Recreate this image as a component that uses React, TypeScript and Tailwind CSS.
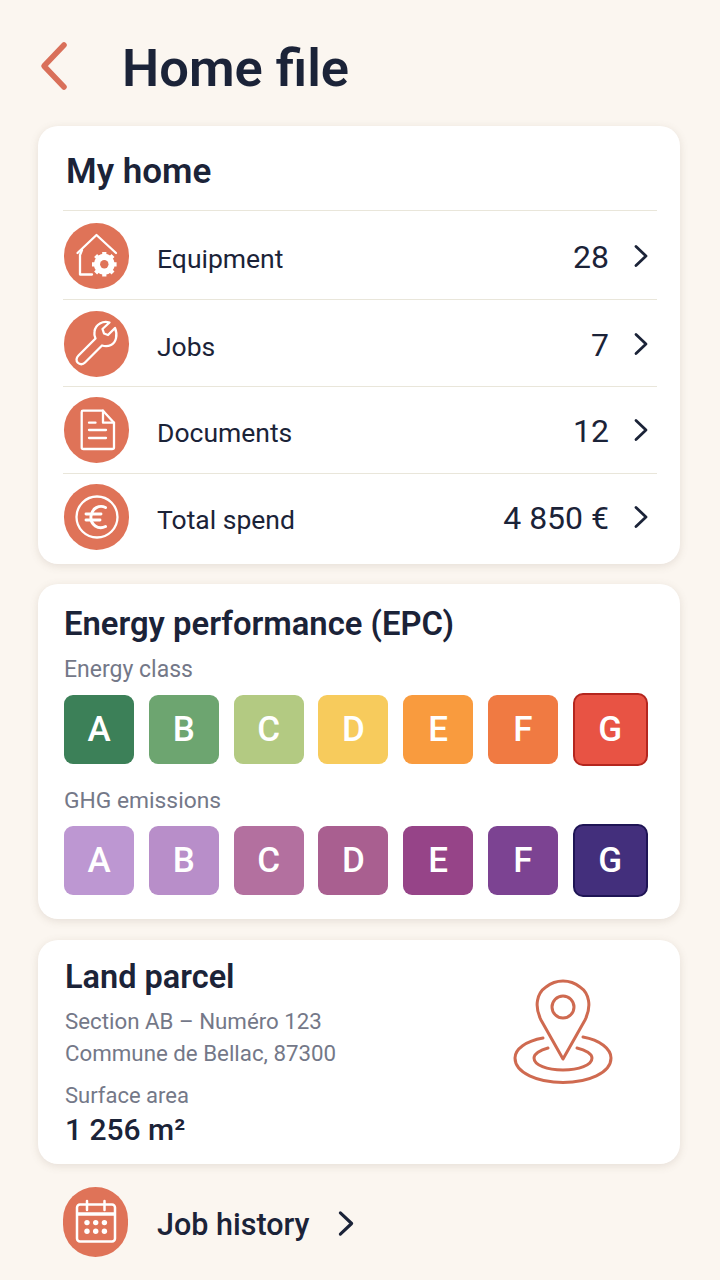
import React from "react";

const stroke = { fill: "none", stroke: "#fff", strokeWidth: 2.3, strokeLinecap: "round", strokeLinejoin: "round" } as const;

const Chevron = ({ className }: { className: string }) => (
  <svg viewBox="0 0 16 24" className={className} fill="none" stroke="#1b2338" strokeWidth="2.800" strokeLinecap="round" strokeLinejoin="round">
    <path d="M3 2.500 L13 12 L3 21.500" />
  </svg>
);

const HomeGear = () => (
  <svg viewBox="0 0 66 66" className="w-[66px] h-[66px]">
    <g {...stroke}>
      <path d="M13.500 30 L32.500 12 L52 30" />
      <path d="M18 27 L16 32 V51.500 H28" />
    </g>
    <circle cx="40.300" cy="41.300" r="7.500" fill="none" stroke="#fff" strokeWidth="6" />
    <g stroke="#fff" strokeWidth="4.200" strokeLinecap="butt">
      <path d="M40.300 29 V53.600 M28 41.300 H52.600 M31.600 32.600 L49 50 M49 32.600 L31.600 50" />
    </g>
    <circle cx="40.300" cy="41.300" r="4.200" fill="#df7358" />
  </svg>
);
const Wrench = () => (
  <svg viewBox="0 0 66 66" className="w-[66px] h-[66px]">
    <path {...stroke} d="M51 17 L44 24 L40 22.500 L38.500 18 L45.500 11.500 C39 9.500 31.500 13 30.500 20.500 C30 23.500 30.500 25.500 31.500 27.500 L14.500 44.500 C12 47 12 50 13.800 51.800 C15.800 53.800 18.800 53.800 21 51.500 L38 34.500 C41 35.500 44 35.500 47 34 C52 31.500 54 24 51 17 Z" />
  </svg>
);
const Doc = () => (
  <svg viewBox="0 0 66 66" className="w-[66px] h-[66px]">
    <g {...stroke}>
      <path d="M19 13.700 H39 L50 25.700 V50.500 C50 51.500 49 52 48 52 H19.500 C18.500 52 17.700 51.500 17.700 50.500 V15 C17.700 14.200 18.200 13.700 19 13.700 Z" />
      <path d="M39 13.700 V25.700 H50" />
      <path d="M25 25.700 H31.500 M25 33 H42 M25 41 H42" />
    </g>
  </svg>
);
const Euro = () => (
  <svg viewBox="0 0 66 66" className="w-[66px] h-[66px]">
    <g {...stroke}>
      <circle cx="33" cy="33" r="20.500" />
      <path d="M41.500 23.500 C35.500 20.500 28 24 27 32 C26 41 34.500 46 41.500 42.500" strokeWidth="2.900" />
      <path d="M22 30 H37 M22 36 H36" strokeWidth="2.900" />
    </g>
  </svg>
);
const Calendar = () => (
  <svg viewBox="0 0 66 66" className="w-[66px] h-[66px] shrink-0">
    <g {...stroke} strokeWidth="2.500">
      <rect x="14" y="15.500" width="38" height="37" rx="3" />
      <path d="M24 12 V21 M41.500 12 V21" />
    </g>
    <path d="M14 25 H52" stroke="#fff" strokeWidth="3.500" />
    <g fill="#fff">
      <circle cx="24" cy="33.600" r="2.700" /><circle cx="32.700" cy="33.600" r="2.700" /><circle cx="41.400" cy="33.600" r="2.700" />
      <circle cx="24" cy="42.300" r="2.700" /><circle cx="32.700" cy="42.300" r="2.700" /><circle cx="41.400" cy="42.300" r="2.700" />
    </g>
  </svg>
);
const Pin = () => (
  <svg viewBox="0 0 100 106" className="w-[100px] h-[106px]" fill="none" stroke="#cf6a50" strokeWidth="3" strokeLinecap="round" strokeLinejoin="round">
    <path d="M50 81 L28 42 C21 28 24 15 33 9 C43 1 57 1 67 9 C76 15 79 28 72 42 Z" />
    <circle cx="50" cy="29" r="11" />
    <path d="M30 60 C13 63 2 71 2 80 C2 95 25 104.500 50 104.500 C75 104.500 98 95 98 80 C98 71 87 62 70 59" />
    <path d="M35 70 C27 72 21 76 21 80 C21 87 34 92 50 92 C66 92 79 87 79 80 C79 76 73 72 64 70" />
  </svg>
);

const rows = [
  { icon: <HomeGear />, label: "Equipment", value: "28", h: "h-[89px] pt-[2px]" },
  { icon: <Wrench />, label: "Jobs", value: "7", h: "h-[87px] pt-[2px]" },
  { icon: <Doc />, label: "Documents", value: "12", h: "h-[87px]" },
  { icon: <Euro />, label: "Total spend", value: "4 850 €", h: "h-[90px] pb-[4px]" },
];

const energy = [
  ["A", "bg-[#3c8058]"], ["B", "bg-[#6da570]"], ["C", "bg-[#b3ca82]"], ["D", "bg-[#f7cb5c]"],
  ["E", "bg-[#f99b3e]"], ["F", "bg-[#f07a42]"],
];
const ghg = [
  ["A", "bg-[#bd97d2]"], ["B", "bg-[#b88ec9]"], ["C", "bg-[#b3709f]"], ["D", "bg-[#a95f90]"],
  ["E", "bg-[#964488]"], ["F", "bg-[#7c4392]"],
];

function Scale({ items, last }: { items: string[][]; last: string }) {
  return (
    <div className="flex items-center gap-[14.800px]">
      {items.map(([l, c]) => (
        <div key={l} className={`w-[70px] h-[69px] rounded-[9px] flex items-center justify-center pt-px text-white text-[35px] font-medium ${c}`}>{l}</div>
      ))}
      <div className={`w-[75px] h-[73px] rounded-[10px] border-2 flex items-center justify-center pt-px text-white text-[35px] font-medium ${last}`}>G</div>
    </div>
  );
}

export default function App() {
  return (
    <div className="w-[720px] h-[1280px] overflow-hidden bg-[#fbf6f0] pl-[38px] pr-[40px] text-[#1b2338] font-['Roboto',sans-serif]">
      <header className="h-[126px] flex items-center">
        <svg viewBox="0 0 30 50" className="w-[30px] h-[50px] ml-[2px] mt-[5px]" fill="none" stroke="#d9705a" strokeWidth="5.500" strokeLinecap="round" strokeLinejoin="round">
          <path d="M24 4 L4 25 L24 46" />
        </svg>
        <h1 className="ml-[52px] mt-[10px] text-[52.500px] font-semibold leading-none">Home file</h1>
      </header>

      <section className="h-[438px] bg-white rounded-[20px] shadow-[0_2px_8px_rgba(120,100,80,0.16)] pl-[25px] pr-[23px]">
        <h2 className="h-[85px] flex items-center text-[35px] font-semibold pt-[8px] pl-[3px] border-b border-[#e9e6da]">My home</h2>
        {rows.map((r, i) => (
          <div key={r.label} className={`flex items-center ${r.h} ${i < 3 ? "border-b border-[#e9e6da]" : ""}`}>
            <div className="w-[65px] h-[66px] ml-px rounded-full bg-[#df7358] shrink-0">{r.icon}</div>
            <span className="ml-[28px] mt-[6px] text-[26.500px] leading-none">{r.label}</span>
            <span className="ml-auto mt-px text-[32px] leading-none">{r.value}</span>
            <Chevron className="ml-[24px] mr-[8px] w-[16px] h-[24px]" />
          </div>
        ))}
      </section>

      <section className="h-[335px] mt-[20px] bg-white rounded-[20px] shadow-[0_2px_8px_rgba(120,100,80,0.16)] pl-[26px] pr-[32px] pt-[18px]">
        <h2 className="text-[32.800px] leading-[44px] font-semibold whitespace-nowrap">Energy performance (EPC)</h2>
        <p className="text-[23px] leading-[32px] text-[#747888] mt-[8px] mb-[7px]">Energy class</p>
        <Scale items={energy} last="bg-[#e85344] border-[#b4261e]" />
        <p className="text-[22.800px] leading-[32px] text-[#747888] mt-[19px] mb-[7px]">GHG emissions</p>
        <Scale items={ghg} last="bg-[#432f7c] border-[#1f1555]" />
      </section>

      <section className="h-[224px] mt-[21px] bg-white rounded-[20px] shadow-[0_2px_8px_rgba(120,100,80,0.16)] pl-[27px] pr-[67px] flex items-start justify-between">
        <div className="pt-[15px]">
          <h2 className="text-[32.500px] leading-[44px] font-semibold">Land parcel</h2>
          <p className="text-[22.300px] leading-[32px] text-[#747888] mt-[6px]">Section AB – Numéro 123</p>
          <p className="text-[22.300px] leading-[32px] text-[#747888]">Commune de Bellac, 87300</p>
          <p className="text-[22px] leading-[32px] text-[#747888] mt-[11px]">Surface area</p>
          <p className="text-[30px] leading-[36px] font-medium">1 256 m²</p>
        </div>
        <div className="mt-[38px]"><Pin /></div>
      </section>

      <footer className="h-[116px] flex items-center pl-[25px]">
        <div className="w-[65px] h-[70px] rounded-full bg-[#df7358] flex items-center justify-center shrink-0"><Calendar /></div>
        <span className="ml-[29px] mt-[6px] text-[30.500px] font-medium leading-none">Job history</span>
        <Chevron className="ml-[27px] mt-[2px] w-[18px] h-[27px]" />
      </footer>
    </div>
  );
}
